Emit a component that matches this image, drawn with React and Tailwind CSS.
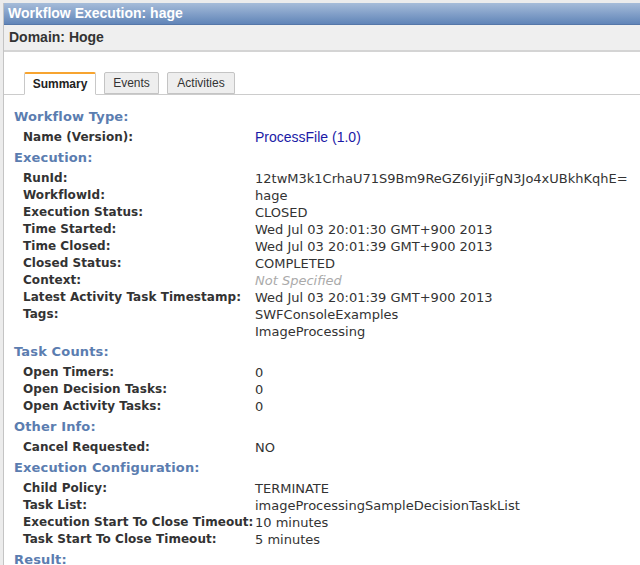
import React from 'react';

const sections = [
  {
    title: 'Workflow Type:',
    rows: [{ label: 'Name (Version):', value: 'ProcessFile (1.0)', link: true }],
  },
  {
    title: 'Execution:',
    rows: [
      { label: 'RunId:', value: '12twM3k1CrhaU71S9Bm9ReGZ6IyjiFgN3Jo4xUBkhKqhE=' },
      { label: 'WorkflowId:', value: 'hage' },
      { label: 'Execution Status:', value: 'CLOSED' },
      { label: 'Time Started:', value: 'Wed Jul 03 20:01:30 GMT+900 2013' },
      { label: 'Time Closed:', value: 'Wed Jul 03 20:01:39 GMT+900 2013' },
      { label: 'Closed Status:', value: 'COMPLETED' },
      { label: 'Context:', value: 'Not Specified', empty: true },
      { label: 'Latest Activity Task Timestamp:', value: 'Wed Jul 03 20:01:39 GMT+900 2013' },
      { label: 'Tags:', value: ['SWFConsoleExamples', 'ImageProcessing'] },
    ],
  },
  {
    title: 'Task Counts:',
    rows: [
      { label: 'Open Timers:', value: '0' },
      { label: 'Open Decision Tasks:', value: '0' },
      { label: 'Open Activity Tasks:', value: '0' },
    ],
  },
  {
    title: 'Other Info:',
    rows: [{ label: 'Cancel Requested:', value: 'NO' }],
  },
  {
    title: 'Execution Configuration:',
    rows: [
      { label: 'Child Policy:', value: 'TERMINATE' },
      { label: 'Task List:', value: 'imageProcessingSampleDecisionTaskList' },
      { label: 'Execution Start To Close Timeout:', value: '10 minutes' },
      { label: 'Task Start To Close Timeout:', value: '5 minutes' },
    ],
  },
  {
    title: 'Result:',
    rows: [],
  },
];

const verdana = "font-['Verdana','DejaVu_Sans',sans-serif]";
const arial = "font-['Liberation_Sans',Arial,sans-serif]";

const Row = ({ row }) => {
  const values = Array.isArray(row.value) ? row.value : [row.value];
  return (
    <div className="grid grid-cols-[232px_1fr] pl-[19px]">
      <p className="whitespace-nowrap text-[12px] tracking-[0.05px] font-bold leading-[17px] text-[#333]">{row.label}</p>
      <div>
        {values.map((v, i) =>
          row.link ? (
            <p key={i} className={`${arial} text-[14px] leading-[17px] text-[#1a1aa6]`}>{v}</p>
          ) : row.empty ? (
            <p key={i} className="italic text-[13px] leading-[17px] text-[#aaa]">{v}</p>
          ) : (
            <p key={i} className="text-[13px] leading-[17px] text-[#333]">{v}</p>
          )
        )}
      </div>
    </div>
  );
};

const App = () => {
  return (
    <div className="h-[565px] overflow-hidden bg-[#ececec] pt-[3px] pl-[3px]">
      <div className="h-full bg-white border-l border-[#c4c4c4]">
        {/* title bar */}
        <div className="h-[22px] bg-gradient-to-b from-[#a6bcd9] to-[#6185b8] border-b border-[#5577a8] px-[4px]">
          <p className={`${arial} text-[14px] font-bold leading-[21px] text-white`}>Workflow Execution: hage</p>
        </div>
        <div className="h-[27px] bg-[#efefef] border-b-2 border-[#d4d4d4] px-[5px]">
          <p className={`${arial} text-[14px] font-bold leading-[25px] text-[#333]`}>Domain: Hoge</p>
        </div>

        {/* tabs */}
        <div className={`${arial} h-[43px] flex items-end gap-[8px] pl-[20px] border-b border-[#cccccc] text-[12px]`}>
          <div className="relative -mb-px h-[23px] w-[72px] bg-white border border-[#c8c8c8] border-b-white border-t-2 border-t-[#f7a430] rounded-t-[2px] flex items-center justify-center font-bold text-[#222]">
            Summary
          </div>
          <div className="h-[22px] w-[55px] bg-[#eeeeee] border border-[#c4c4c4] rounded-t-[2px] flex items-center justify-center text-[#333]">
            Events
          </div>
          <div className="h-[22px] w-[68px] bg-[#eeeeee] border border-[#c4c4c4] rounded-t-[2px] flex items-center justify-center text-[#333]">
            Activities
          </div>
        </div>

        {/* summary */}
        <div className={`${verdana} pt-[10px]`}>
          {sections.map((s) => (
            <div key={s.title}>
              <p className="pt-[2px] pb-[2px] pl-[10px] text-[13px] tracking-[0.15px] font-bold leading-[20px] text-[#5b7db0]">{s.title}</p>
              {s.rows.map((r) => (
                <Row key={r.label} row={r} />
              ))}
            </div>
          ))}
        </div>
      </div>
    </div>
  );
};

export default App;
